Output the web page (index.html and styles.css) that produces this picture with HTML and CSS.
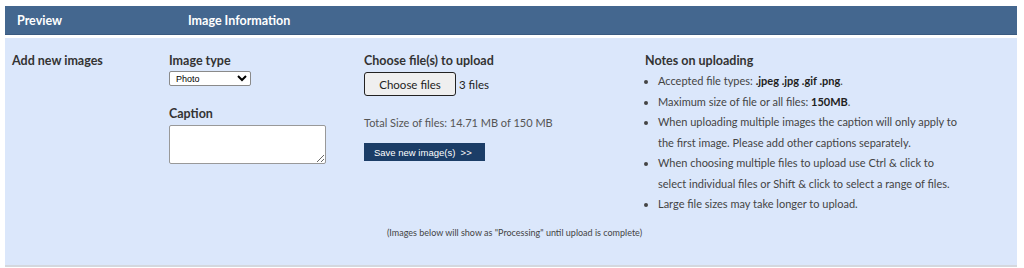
FILE: index.html
```html
<!DOCTYPE html>
<html lang="en">
<head>
  <meta charset="UTF-8">
  <title>Image Information</title>
  <link rel="stylesheet" href="styles.css">
</head>
<body>
  <div class="panel">
    <div class="panel-head">
      <span class="head-preview">Preview</span>
      <span class="head-info">Image Information</span>
    </div>

    <div class="panel-body">
      <div class="upload-grid">
        <div class="col-label">Add new images</div>

        <div class="col-type">
          <label class="field-title">Image type</label>
          <select class="type-select">
            <option>Photo</option>
            <option>Document</option>
          </select>
          <label class="field-title caption-title">Caption</label>
          <textarea class="caption-box"></textarea>
        </div>

        <div class="col-files">
          <div class="field-title">Choose file(s) to upload</div>
          <div class="file-row">
            <button class="choose-btn">Choose files</button>
            <span class="file-count">3 files</span>
          </div>
          <div class="total-size">Total Size of files: 14.71 MB of 150 MB</div>
          <button class="save-btn">Save new image(s) &nbsp;&gt;&gt;</button>
        </div>

        <div class="col-notes">
          <div class="field-title">Notes on uploading</div>
          <ul class="notes">
            <li>Accepted file types: <b>.jpeg .jpg .gif .png</b>.</li>
            <li>Maximum size of file or all files: <b>150MB</b>.</li>
            <li>When uploading multiple images the caption will only apply to the first image. Please add other captions separately.</li>
            <li>When choosing multiple files to upload use Ctrl &amp; click to select individual files or Shift &amp; click to select a range of files.</li>
            <li>Large file sizes may take longer to upload.</li>
          </ul>
        </div>
      </div>

      <p class="processing">(Images below will show as "Processing" until upload is complete)</p>
    </div>
  </div>
</body>
</html>
```

FILE: styles.css
```css
body {
  margin: 0;
  padding: 6px 7px 0 5px;
  font-family: 'Lato', 'Open Sans', sans-serif;
  font-size: 11px;
  color: #333;
  background: #fff;
}
.panel-head {
  background: #44678f;
  color: #fff;
  font-weight: bold;
  font-size: 12.5px;
  height: 28px;
  display: flex;
  align-items: center;
  border-bottom: 1px solid #3a5a80;
}
.head-preview {
  width: 171px;
  padding-left: 12px;
}
.panel-body {
  margin-top: 3px;
  background: #dbe7fb;
  border-bottom: 2px solid #d4d8de;
  height: 229px;
  box-sizing: border-box;
  padding: 15px 0 0 7px;
}
.upload-grid {
  display: grid;
  grid-template-columns: 157px 195px 281px 1fr;
}
.col-label,
.field-title {
  font-weight: bold;
  font-size: 12.5px;
  color: #333;
  display: block;
  line-height: 15px;
}
.type-select {
  display: block;
  margin-top: 3px;
  width: 82px;
  height: 15px;
  font-size: 9px;
  font-family: 'Liberation Sans', sans-serif;
  padding: 0 2px;
  border: 1px solid #8a8a8a;
  border-radius: 2px;
  background: #fff;
}
.caption-title {
  margin-top: 20px;
}
.caption-box {
  display: block;
  margin-top: 4px;
  width: 157px;
  height: 39px;
  box-sizing: border-box;
  border: 1px solid #999;
  border-radius: 2px;
  background: #fff;
  resize: vertical;
}
.file-row {
  display: flex;
  align-items: center;
  margin-top: 4px;
}
.choose-btn {
  width: 92px;
  height: 24px;
  font-family: inherit;
  font-size: 11.5px;
  color: #222;
  background: #efefef;
  border: 1px solid #222;
  border-radius: 3px;
}
.file-count {
  margin-left: 3px;
  font-size: 11.5px;
  color: #222;
}
.total-size {
  margin-top: 20px;
  color: #555;
}
.save-btn {
  margin-top: 14px;
  width: 121px;
  height: 18px;
  background: #1b3d67;
  color: #fff;
  border: none;
  font-family: 'Liberation Sans', sans-serif;
  font-size: 9.5px;
  text-align: left;
  padding: 0 10px;
}
.notes {
  margin: 3px 0 0;
  padding-left: 13px;
  color: #444;
  line-height: 20.5px;
  max-width: 300px;
}
.notes b {
  color: #222;
}
.processing {
  margin: 12px 0 0;
  text-align: center;
  font-size: 9px;
  color: #444;
}
```
